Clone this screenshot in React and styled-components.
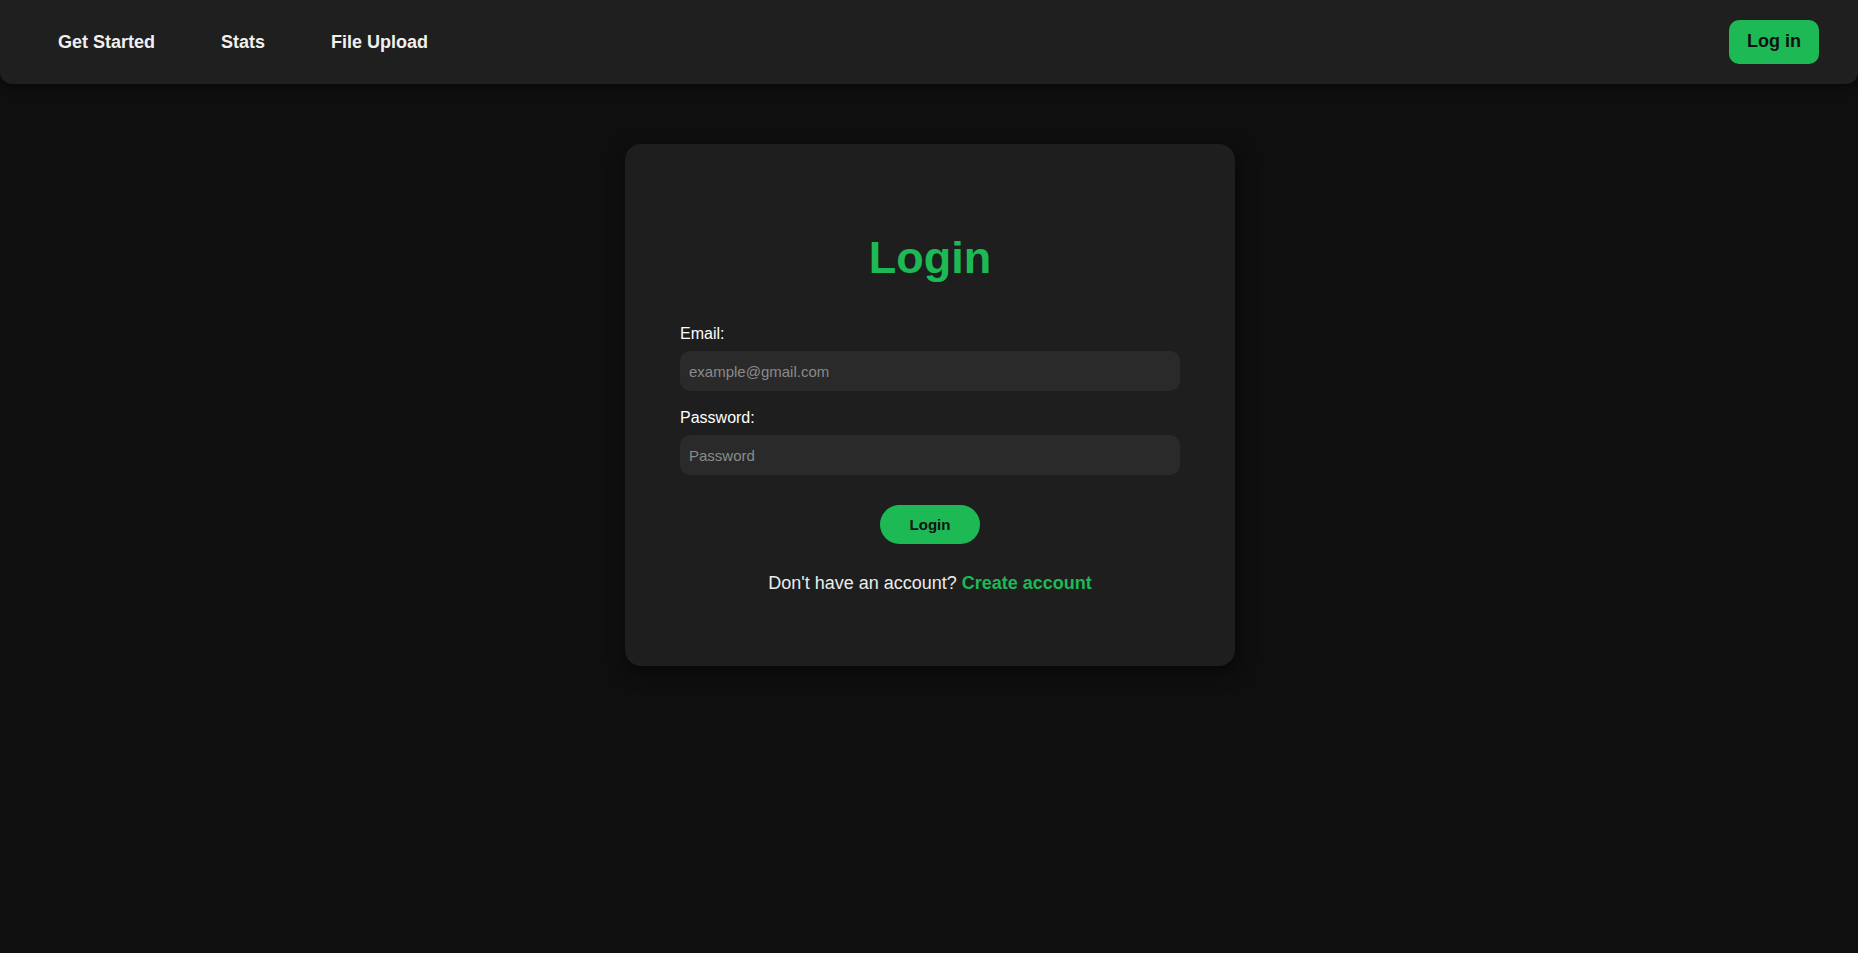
import React from "react";
import styled, { createGlobalStyle } from "styled-components";

const GlobalStyle = createGlobalStyle`
  html, body {
    margin: 0;
    padding: 0;
    background: #0f0f0f;
    font-family: "Liberation Sans", Arial, sans-serif;
    color: #ffffff;
  }
  * { box-sizing: border-box; }
`;

const Page = styled.div`
  min-height: 100vh;
  background: #0f0f0f;
  display: flex;
  flex-direction: column;
`;

const NavBar = styled.nav`
  height: 84px;
  background: #1f1f1f;
  border-radius: 0 0 12px 12px;
  box-shadow: 0 2px 10px rgba(0, 0, 0, 0.55);
  display: flex;
  align-items: center;
  justify-content: space-between;
  padding: 0 39px 0 40px;
  position: relative;
  z-index: 1;
`;

const NavLinks = styled.div`
  display: flex;
  align-items: center;
  gap: 30px;
`;

const NavLink = styled.a`
  font-size: 18px;
  font-weight: 700;
  color: #f0f0f0;
  text-decoration: none;
  padding: 8px 18px;
  line-height: 21px;
  cursor: pointer;
`;

const NavButton = styled.button`
  height: 44px;
  margin-top: -1px;
  padding: 0 18px;
  border: none;
  border-radius: 10px;
  background: #1db954;
  color: #111111;
  font-family: "Liberation Sans", Arial, sans-serif;
  font-size: 18px;
  font-weight: 700;
  cursor: pointer;
`;

const Main = styled.main`
  display: flex;
  justify-content: center;
  padding: 60px 0 0 2px;
`;

const Card = styled.div`
  width: 610px;
  background: #1e1e1e;
  border-radius: 16px;
  padding: 56px 55px;
  box-shadow: 2px 6px 18px rgba(0, 0, 0, 0.55);
  display: flex;
  flex-direction: column;
`;

const Title = styled.h1`
  margin: 32px 0 41px;
  font-size: 45px;
  line-height: 52px;
  font-weight: 700;
  color: #1db954;
  text-align: center;
`;

const Field = styled.div`
  display: flex;
  flex-direction: column;
  margin-bottom: ${(p) => p.$mb || 0}px;
`;

const Label = styled.label`
  font-size: 16px;
  line-height: 18px;
  color: #ffffff;
  margin-bottom: 8px;
`;

const Input = styled.input`
  height: 40px;
  width: 100%;
  border: none;
  outline: none;
  border-radius: 10px;
  background: #2a2a2a;
  color: #ffffff;
  padding: 0 9px;
  font-family: "Liberation Sans", Arial, sans-serif;
  font-size: 15px;
  &::placeholder {
    color: #8a8a8a;
  }
`;

const SubmitButton = styled.button`
  align-self: center;
  width: 100px;
  height: 39px;
  margin-top: 30px;
  border: none;
  border-radius: 20px;
  background: #1db954;
  color: #121212;
  font-family: "Liberation Sans", Arial, sans-serif;
  font-size: 15px;
  font-weight: 700;
  cursor: pointer;
`;

const Footer = styled.p`
  margin: 29px 0 16px;
  font-size: 18px;
  line-height: 21px;
  text-align: center;
  color: #ececec;
`;

const FooterLink = styled.a`
  color: #1db954;
  font-weight: 700;
  text-decoration: none;
  cursor: pointer;
`;

export default function App() {
  return (
    <Page>
      <GlobalStyle />
      <NavBar>
        <NavLinks>
          <NavLink>Get Started</NavLink>
          <NavLink>Stats</NavLink>
          <NavLink>File Upload</NavLink>
        </NavLinks>
        <NavButton>Log in</NavButton>
      </NavBar>
      <Main>
        <Card>
          <Title>Login</Title>
          <Field $mb={18}>
            <Label>Email:</Label>
            <Input type="email" placeholder="example@gmail.com" />
          </Field>
          <Field>
            <Label>Password:</Label>
            <Input type="password" placeholder="Password" />
          </Field>
          <SubmitButton>Login</SubmitButton>
          <Footer>
            Don't have an account? <FooterLink>Create account</FooterLink>
          </Footer>
        </Card>
      </Main>
    </Page>
  );
}
